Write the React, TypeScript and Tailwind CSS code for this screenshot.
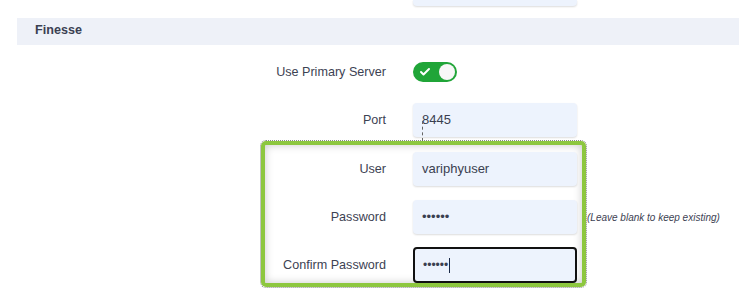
import { Check } from "lucide-react";

const inputCls =
  "w-[164px] h-[34px] rounded-[4px] bg-[#edf3fd] shadow-[0_1px_2px_rgba(0,0,0,0.14)] flex items-center pl-[9px] text-[13px] text-[#3a3f50] shrink-0";

function Row({ label, children, className = "" }: { label: string; children: React.ReactNode; className?: string }) {
  return (
    <div className={`flex items-center ${className}`}>
      <div className="w-[122px] text-right text-[12.6px] text-[#3d4253] shrink-0 whitespace-nowrap">{label}</div>
      <div className="ml-[27px] flex items-center">{children}</div>
    </div>
  );
}

export default function App() {
  return (
    <div className="w-[739px] h-[290px] bg-white overflow-hidden font-['Liberation_Sans',Arial,sans-serif]">
      {/* bottom edge of the previous field */}
      <div className="ml-[413px] w-[164px] h-[6px] rounded-b-[4px] bg-[#edf3fd] shadow-[0_1px_2px_rgba(0,0,0,0.14)]" />

      <div className="mt-[12px] ml-[17px] h-[27px] bg-[#eef1f8] flex items-start pt-[3px] pl-[18px]">
        <span className="text-[12.6px] font-bold text-[#3b4052]">Finesse</span>
      </div>

      <div className="pl-[264px]">
        <Row label="Use Primary Server" className="mt-[17px] h-[20px]">
          <div className="w-[44px] h-[20px] rounded-full bg-[#20a538] flex items-center justify-between pl-[6px] pr-[2px]">
            <Check size={12} strokeWidth={4} className="text-white" />
            <div className="w-[16px] h-[16px] rounded-full bg-[#f7f7f7]" />
          </div>
        </Row>

        <Row label="Port" className="mt-[21px]">
          <div className={`${inputCls} relative`}>
            8445
            <div className="absolute left-[9px] top-[18px] h-[20px] border-l border-dashed border-[#666]" />
          </div>
        </Row>
      </div>

      <div className="pl-[261px] mt-[4px]">
        <div className="w-[325px] border-4 border-[#8dc73f] rounded-[5px] outline outline-1 outline-dotted outline-[#888] shadow-[inset_0_0_8px_rgba(0,0,0,0.22)] pt-[7px] flex flex-col">
          <Row label="User" className="-ml-px">
            <div className={inputCls}>variphyuser</div>
          </Row>
          <Row label="Password" className="mt-[14px] -ml-px">
            <div className={`${inputCls} text-[12px]`}>••••••</div>
            <span className="ml-[10px] text-[10px] italic text-[#3d4253] whitespace-nowrap shrink-0">
              (Leave blank to keep existing)
            </span>
          </Row>
          <Row label="Confirm Password" className="mt-[13px] -ml-px">
            <div className="w-[164px] h-[36px] rounded-[4px] bg-[#edf3fd] border-2 border-[#111] flex items-center pl-[8px] text-[12px] text-[#3a3f50] shrink-0">
              ••••••
              <span className="ml-[1px] w-px h-[15px] bg-[#1b2a48]" />
            </div>
          </Row>
        </div>
      </div>
    </div>
  );
}
